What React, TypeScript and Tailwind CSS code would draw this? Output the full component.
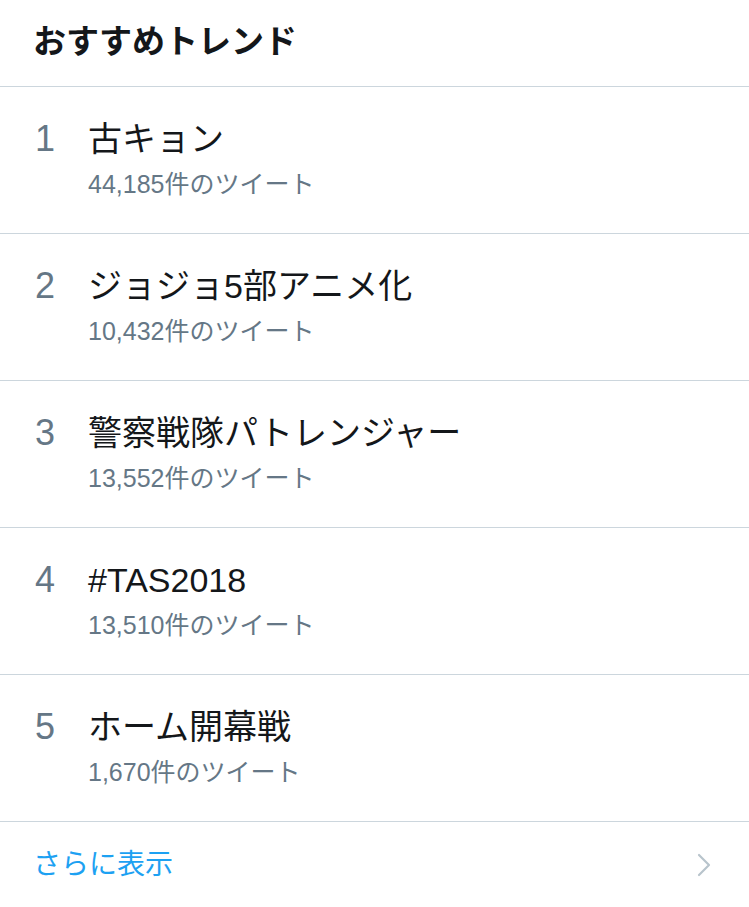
const trends = [
  { rank: 1, name: '古キョン', count: '44,185件のツイート' },
  { rank: 2, name: 'ジョジョ5部アニメ化', count: '10,432件のツイート' },
  { rank: 3, name: '警察戦隊パトレンジャー', count: '13,552件のツイート' },
  { rank: 4, name: '#TAS2018', count: '13,510件のツイート' },
  { rank: 5, name: 'ホーム開幕戦', count: '1,670件のツイート' },
];

export default function App() {
  return (
    <div
      className="w-[749px] h-[907px] bg-white overflow-hidden"
      style={{ fontFamily: '"Liberation Sans", "Noto Sans CJK JP", sans-serif' }}
    >
      {/* Header */}
      <div className="h-[87px] flex items-center pl-[33px] border-b border-[#ccd6dd]">
        <h2 className="text-[33px] font-bold text-[#14171a] leading-[40px] pb-[2px]">おすすめトレンド</h2>
      </div>

      {/* Trend rows */}
      {trends.map((t) => (
        <div key={t.rank} className="flex border-b border-[#ccd6dd] pt-8 pb-[34px]">
          <div className="w-[88px] pl-[35px] text-[36px] leading-[40px] text-[#657786]">{t.rank}</div>
          <div className="flex flex-col">
            <div className="text-[34px] leading-[40px] text-[#14171a]">{t.name}</div>
            <div className="mt-2.5 text-[25px] leading-[30px] text-[#657786]">{t.count}</div>
          </div>
        </div>
      ))}

      {/* Footer */}
      <div className="h-[86px] flex items-center justify-between pl-[33px] pr-[38px]">
        <span className="text-[28px] leading-[34px] text-[#1da1f2]">さらに表示</span>
        <svg width="14" height="24" viewBox="0 0 14 24" fill="none">
          <path d="M2 2l10 10-10 10" stroke="#b8c4cc" strokeWidth="2.2" strokeLinecap="round" strokeLinejoin="round" />
        </svg>
      </div>
    </div>
  );
}
